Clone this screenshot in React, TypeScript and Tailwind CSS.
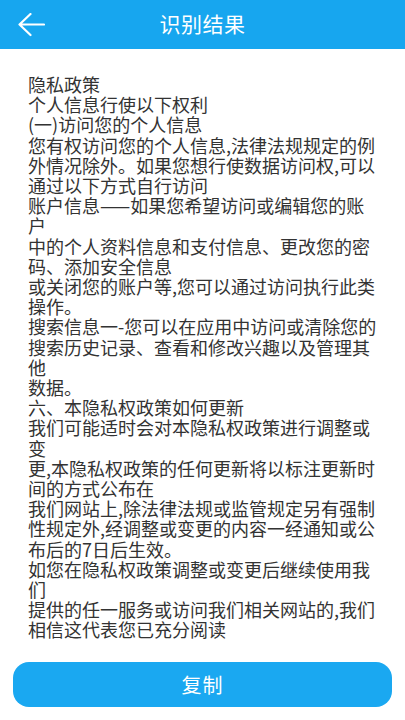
import React from "react";

const lines = [
  "隐私政策",
  "个人信息行使以下权利",
  "(一)访问您的个人信息",
  "您有权访问您的个人信息,法律法规规定的例",
  "外情况除外。如果您想行使数据访问权,可以",
  "通过以下方式自行访问",
  "账户信息——如果您希望访问或编辑您的账",
  "户",
  "中的个人资料信息和支付信息、更改您的密",
  "码、添加安全信息",
  "或关闭您的账户等,您可以通过访问执行此类",
  "操作。",
  "搜索信息一-您可以在应用中访问或清除您的",
  "搜索历史记录、查看和修改兴趣以及管理其",
  "他",
  "数据。",
  "六、本隐私权政策如何更新",
  "我们可能适时会对本隐私权政策进行调整或",
  "变",
  "更,本隐私权政策的任何更新将以标注更新时",
  "间的方式公布在",
  "我们网站上,除法律法规或监管规定另有强制",
  "性规定外,经调整或变更的内容一经通知或公",
  "布后的7日后生效。",
  "如您在隐私权政策调整或变更后继续使用我",
  "们",
  "提供的任一服务或访问我们相关网站的,我们",
  "相信这代表您已充分阅读",
];

export default function App() {
  return (
    <div
      className="w-[405px] h-[720px] flex flex-col bg-white overflow-hidden"
      style={{ fontFamily: '"Noto Sans CJK SC", "Noto Sans", sans-serif' }}
    >
      <header className="h-[49px] shrink-0 bg-[#17a6ef] grid grid-cols-[1fr_auto_1fr] items-center">
        <div className="pl-[17px] flex items-center">
          <svg width="28" height="24" viewBox="0 0 28 24" fill="none">
            <path
              d="M27 11.5H2.5M13.5 1L2.5 11.5L13.5 22"
              stroke="white"
              strokeWidth="2.2"
              strokeLinecap="round"
              strokeLinejoin="round"
            />
          </svg>
        </div>
        <h1 className="text-white text-[21px] leading-none font-normal tracking-[0.5px] -mt-[2px]">
          识别结果
        </h1>
        <div />
      </header>

      <main className="flex-1 overflow-hidden pt-[25px] pl-[28px] pr-[10px] text-[18px] leading-[20.2px] text-[#333333]">
        {lines.map((l, i) => (
          <div key={i} className="whitespace-nowrap">
            {l}
          </div>
        ))}
      </main>

      <footer className="shrink-0 px-[13px] pb-[13px]">
        <button className="w-full h-[45px] rounded-[16px] bg-[#1aa8f1] text-white text-[20px] flex items-center justify-center tracking-[1px]">
          复制
        </button>
      </footer>
    </div>
  );
}
